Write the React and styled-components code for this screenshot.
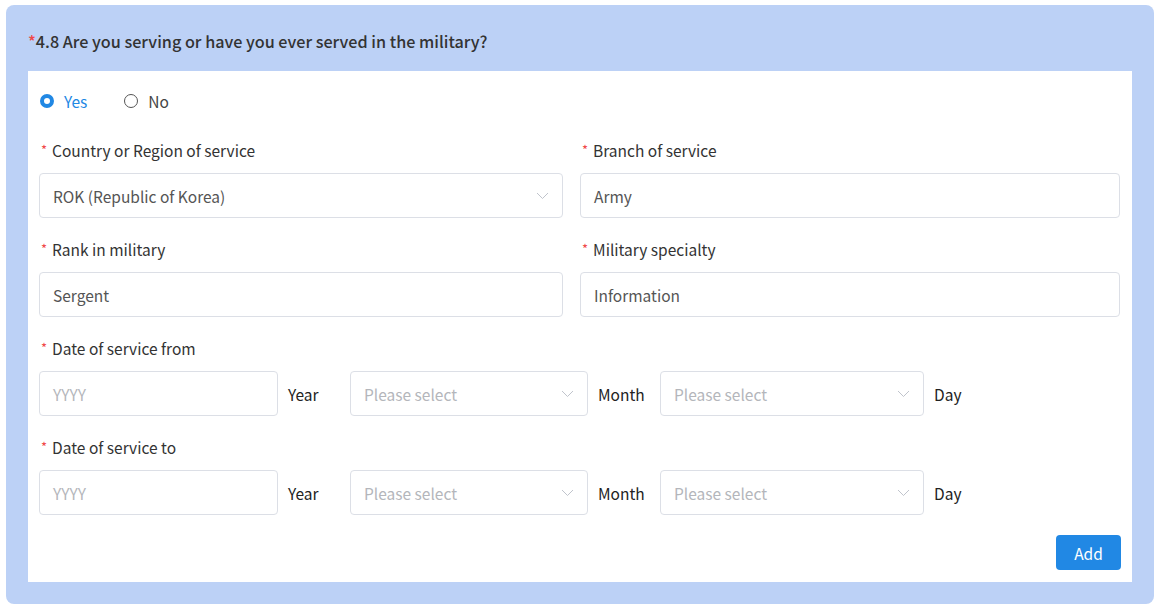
import React from 'react';
import styled, { createGlobalStyle } from 'styled-components';

const GlobalStyle = createGlobalStyle`
  body {
    margin: 0;
    background: #ffffff;
    font-family: "Noto Sans CJK SC", "Noto Sans", sans-serif;
  }
  * { box-sizing: border-box; }
`;

const Page = styled.div`
  padding: 5px 5px 4px 6px;
`;

const Panel = styled.section`
  background: #bcd1f6;
  border-radius: 8px;
  padding: 22px 22px 22px 22px;
`;

const Question = styled.h2`
  margin: 0 0 16px;
  font-size: 16.2px;
  font-weight: 500;
  color: #333333;
  line-height: 28px;
`;

const Star = styled.span`
  color: #f04848;
  font-size: ${(p) => (p.$small ? '13px' : '16.2px')};
  margin-right: ${(p) => (p.$small ? '5px' : '0')};
  vertical-align: ${(p) => (p.$small ? 'top' : 'baseline')};
`;

const Card = styled.div`
  background: #ffffff;
  padding: 18px 11px 12px 11px;
`;

const RadioRow = styled.div`
  display: flex;
  align-items: center;
  gap: 36px;
  height: 24px;
  margin-bottom: 26px;
`;

const RadioItem = styled.label`
  display: flex;
  align-items: center;
  gap: 10px;
  font-size: 15.5px;
  color: ${(p) => (p.$checked ? '#2188e4' : '#444444')};
  padding-left: 1px;
`;

const Dot = styled.span`
  width: 14px;
  height: 14px;
  border-radius: 50%;
  border: ${(p) => (p.$checked ? '4px solid #2188e4' : '1px solid #555555')};
  background: #ffffff;
`;

const Grid = styled.div`
  display: grid;
  grid-template-columns: 524px 540px;
  column-gap: 17px;
`;

const Field = styled.div`
  margin-bottom: 20px;
`;

const Label = styled.div`
  font-size: 15.5px;
  color: #333333;
  line-height: 22px;
  margin-bottom: 12px;
  padding-left: 2px;
`;

const Box = styled.div`
  height: 45px;
  border: 1px solid #dcdfe6;
  border-radius: 4px;
  display: flex;
  align-items: center;
  justify-content: space-between;
  padding: 0 13px 0 13px;
  font-size: 15.5px;
  color: ${(p) => (p.$placeholder ? '#b4b6bb' : '#555555')};
  width: ${(p) => p.$width || 'auto'};
`;

const Chevron = () => (
  <svg width="13" height="8" viewBox="0 0 13 8">
    <path d="M1 1 L6.5 6.5 L12 1" fill="none" stroke="#c0c4cc" strokeWidth="1" />
  </svg>
);

const DateRow = styled.div`
  display: flex;
  align-items: center;
`;

const Unit = styled.span`
  font-size: 15.5px;
  color: #222222;
  width: ${(p) => p.$w};
  padding-left: 10px;
`;

const Footer = styled.div`
  display: flex;
  justify-content: flex-end;
  margin-top: 1px;
`;

const AddButton = styled.button`
  width: 65px;
  height: 35px;
  border: none;
  border-radius: 4px;
  background: #2188e4;
  color: #ffffff;
  font-family: inherit;
  font-size: 15.5px;
`;

const fields = [
  { label: 'Country or Region of service', value: 'ROK (Republic of Korea)', select: true },
  { label: 'Branch of service', value: 'Army' },
  { label: 'Rank in military', value: 'Sergent' },
  { label: 'Military specialty', value: 'Information' },
];

const DateField = ({ label }) => (
  <Field>
    <Label><Star $small>*</Star>{label}</Label>
    <DateRow>
      <Box $placeholder $width="239px">YYYY</Box>
      <Unit $w="72px">Year</Unit>
      <Box $placeholder $width="238px">Please select<Chevron /></Box>
      <Unit $w="72px">Month</Unit>
      <Box $placeholder $width="264px">Please select<Chevron /></Box>
      <Unit $w="60px">Day</Unit>
    </DateRow>
  </Field>
);

const App = () => (
  <>
    <GlobalStyle />
    <Page>
      <Panel>
        <Question><Star>*</Star>4.8 Are you serving or have you ever served in the military?</Question>
        <Card>
          <RadioRow>
            <RadioItem $checked><Dot $checked />Yes</RadioItem>
            <RadioItem><Dot />No</RadioItem>
          </RadioRow>
          <Grid>
            {fields.map((f) => (
              <Field key={f.label}>
                <Label><Star $small>*</Star>{f.label}</Label>
                <Box>
                  {f.value}
                  {f.select && <Chevron />}
                </Box>
              </Field>
            ))}
          </Grid>
          <DateField label="Date of service from" />
          <DateField label="Date of service to" />
          <Footer>
            <AddButton>Add</AddButton>
          </Footer>
        </Card>
      </Panel>
    </Page>
  </>
);

export default App;
